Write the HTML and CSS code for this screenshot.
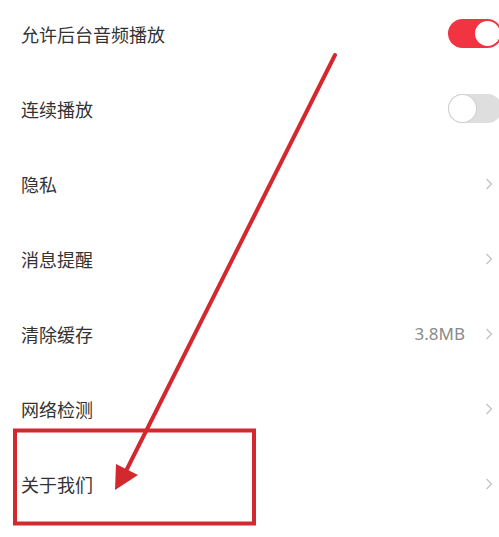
FILE: index.html
```html
<!DOCTYPE html>
<html lang="zh-CN">
<head>
<meta charset="utf-8">
<link rel="stylesheet" href="styles.css">
</head>
<body>
<div class="page">
  <ul class="list">
    <li class="row">
      <span class="label">允许后台音频播放</span>
      <span class="toggle on"><span class="knob"></span></span>
    </li>
    <li class="row">
      <span class="label">连续播放</span>
      <span class="toggle off"><span class="knob"></span></span>
    </li>
    <li class="row">
      <span class="label">隐私</span>
      <span class="right"><svg class="chev" viewBox="0 0 8 12" width="8" height="12"><polyline points="1.5,1 6.5,6 1.5,11" /></svg></span>
    </li>
    <li class="row">
      <span class="label">消息提醒</span>
      <span class="right"><svg class="chev" viewBox="0 0 8 12" width="8" height="12"><polyline points="1.5,1 6.5,6 1.5,11" /></svg></span>
    </li>
    <li class="row">
      <span class="label">清除缓存</span>
      <span class="right"><span class="value">3.8MB</span><svg class="chev" viewBox="0 0 8 12" width="8" height="12"><polyline points="1.5,1 6.5,6 1.5,11" /></svg></span>
    </li>
    <li class="row">
      <span class="label">网络检测</span>
      <span class="right"><svg class="chev" viewBox="0 0 8 12" width="8" height="12"><polyline points="1.5,1 6.5,6 1.5,11" /></svg></span>
    </li>
    <li class="row">
      <span class="label">关于我们</span>
      <span class="right"><svg class="chev" viewBox="0 0 8 12" width="8" height="12"><polyline points="1.5,1 6.5,6 1.5,11" /></svg></span>
    </li>
  </ul>
  <svg class="annotation" viewBox="0 0 499 537" width="499" height="537">
    <rect x="15" y="430.5" width="239" height="93" fill="none" stroke="#d3282e" stroke-width="4"/>
    <line x1="335" y1="55" x2="126" y2="471" stroke="#d3282e" stroke-width="4" stroke-linecap="round"/>
    <polygon points="115,490 116,464 138,475" fill="#d3282e"/>
  </svg>
</div>
</body>
</html>
```
FILE: styles.css
```css
html, body {
  margin: 0;
  padding: 0;
  background: #ffffff;
}
body {
  width: 499px;
  height: 537px;
  overflow: hidden;
  font-family: "Noto Sans CJK SC", "Noto Sans", sans-serif;
}
.page {
  position: relative;
  width: 499px;
  height: 537px;
  overflow: hidden;
}
.list {
  list-style: none;
  margin: -4px 0 0 0;
  padding: 0;
}
.row {
  height: 75px;
  display: flex;
  align-items: center;
  justify-content: space-between;
  padding-left: 21px;
}
.label {
  font-size: 18px;
  color: #333333;
  line-height: 1;
}
.toggle {
  position: relative;
  width: 54px;
  height: 29px;
  border-radius: 15px;
  margin-right: -3px;
  box-sizing: border-box;
}
.toggle.on {
  background: #f23341;
}
.toggle.off {
  background: #dedede;
}
.knob {
  position: absolute;
  top: 2px;
  width: 25px;
  height: 25px;
  border-radius: 50%;
  background: #ffffff;
}
.toggle.on .knob {
  right: 2px;
}
.toggle.off .knob {
  left: 1px;
  top: 1px;
  width: 27px;
  height: 27px;
  box-shadow: 0 0 0 1px #d0d0d0;
}
.right {
  display: flex;
  align-items: center;
  padding-right: 6px;
}
.value {
  font-family: "Noto Sans", "Open Sans", sans-serif;
  font-size: 17px;
  color: #8a8a8a;
  margin-right: 20px;
}
.chev {
  fill: none;
  stroke: #c4c4c4;
  stroke-width: 1.4;
}
.annotation {
  position: absolute;
  left: 0;
  top: 0;
  pointer-events: none;
}
```
